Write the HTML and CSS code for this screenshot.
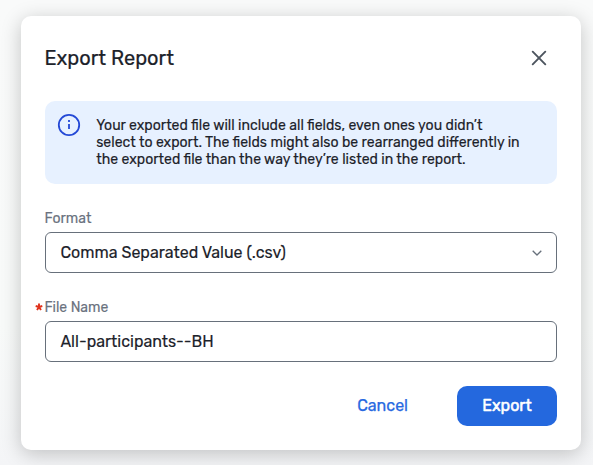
FILE: index.html
```html
<!DOCTYPE html>
<html lang="en">
<head>
<meta charset="utf-8">
<title>Export Report</title>
<link rel="stylesheet" href="styles.css">
</head>
<body>
<main class="dialog">
  <header class="header">
    <h1 class="title">Export Report</h1>
    <svg class="close" viewBox="0 0 16 16"><path d="M1.7 1.7 14.3 14.3M14.3 1.7 1.7 14.3"/></svg>
  </header>
  <section class="notice">
    <svg class="info" viewBox="0 0 24 24"><circle cx="12" cy="12" r="10.2"/><path d="M12 7v2M12 11v5"/></svg>
    <p class="message"><span class="line">Your exported file will include all fields, even ones you didn’t</span><span class="line">select to export. The fields might also be rearranged differently in</span><span class="line">the exported file than the way they’re listed in the report.</span></p>
  </section>
  <div class="field">
    <div class="label"><span>Format</span></div>
    <div class="control"><span>Comma Separated Value (.csv)</span><svg class="chevron" viewBox="0 0 10 6"><path d="M.7.7 5 5 9.3.7"/></svg></div>
  </div>
  <div class="field">
    <div class="label"><span>File Name</span><svg class="required" viewBox="0 0 8 8"><path d="M4 4V.6M4 4 .7 3M4 4l3.3-1M4 4 2 7.1M4 4l2 3.1"/></svg></div>
    <div class="control"><span>All-participants--BH</span></div>
  </div>
  <footer class="actions">
    <span class="cancel">Cancel</span>
    <span class="export">Export</span>
  </footer>
</main>
</body>
</html>
```
FILE: styles.css
```css
* { box-sizing: border-box; }
body {
  margin: 0;
  height: 465px;
  padding: 16px 12px 15px 21px;
  overflow: hidden;
  background: linear-gradient(#f9fafa, #f8faf9 70%, #f4f5f7);
  font-family: Rubik, Roboto, sans-serif;
  color: #1c222a;
}
.dialog {
  width: 560px;
  height: 434px;
  padding: 24px;
  border-radius: 10px;
  background: #fff;
  box-shadow: 0 4px 20px rgba(0, 0, 0, .22);
}
.header {
  display: flex;
  align-items: center;
  justify-content: space-between;
  height: 36px;
  padding-right: 10px;
}
.title {
  margin: 0 0 0 -.6px;
  font-size: 20px;
  font-weight: 400;
  line-height: 24px;
  -webkit-text-stroke: .2px;
}
.close { width: 16px; height: 16px; fill: none; stroke: #4c545e; stroke-width: 1.9; stroke-linecap: round; }
.notice {
  display: flex;
  gap: 15px;
  height: 83px;
  margin-top: 25px;
  padding: 12px 12px 0;
  border-radius: 10px;
  background: #e7f1ff;
}
.info { width: 24px; height: 24px; flex: none; fill: none; stroke: #2449d6; stroke-width: 1.8; }
.message { margin: 4px 0 0 .2px; font-size: 14.05px; line-height: 17px; -webkit-text-stroke: .15px; }
.line { display: block; width: max-content; white-space: nowrap; }
.field { margin-top: 24px; }
.label {
  position: relative;
  height: 24px;
  margin-left: -.6px;
  padding-top: 2px;
  font-size: 14px;
  line-height: 17px;
  color: #6a727e;
  -webkit-text-stroke: .15px;
}
.required { position: absolute; left: -9.4px; top: 6px; width: 8px; height: 8px; fill: none; stroke: #e0321c; stroke-width: 1.9; }
.control {
  display: flex;
  align-items: center;
  justify-content: space-between;
  height: 41px;
  padding: 0 14px 0 14.4px;
  border: 1px solid #67707b;
  border-radius: 6px;
  font-size: 16px;
  -webkit-text-stroke: .15px;
}
.chevron { width: 10px; height: 6px; fill: none; stroke: #67707b; stroke-width: 1.3; }
.actions {
  display: flex;
  align-items: center;
  justify-content: flex-end;
  gap: 49px;
  margin-top: 24px;
  font-size: 16px;
}
.cancel { padding-bottom: 2px; color: #2869e1; -webkit-text-stroke: .25px; }
.export {
  display: flex;
  align-items: center;
  justify-content: center;
  width: 100px;
  height: 40px;
  padding-bottom: 2px;
  border-radius: 10px;
  background: #2468de;
  color: #fff;
  -webkit-text-stroke: .5px;
}
```
